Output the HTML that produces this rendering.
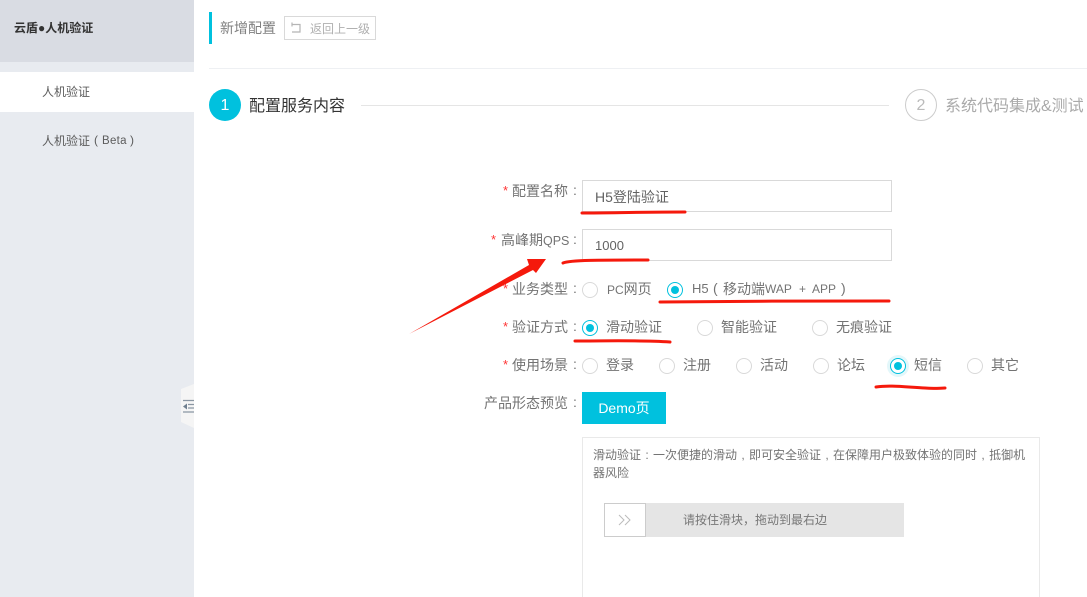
<!DOCTYPE html>
<html lang="zh-CN">
<head>
<meta charset="utf-8">
<title>新增配置</title>
<style>
html,body{margin:0;padding:0;background:#fff}
#p{position:relative;width:1087px;height:597px;overflow:hidden;background:#fff;font-family:"Liberation Sans","Noto Sans CJK SC",sans-serif;color:#737373}
#p div{position:absolute;box-sizing:border-box}
.t{white-space:nowrap;font-size:14px;line-height:20px}
.s{color:#f33;font-size:13px}
.r{width:16px;height:16px;border:1px solid #d9d9d9;border-radius:50%;background:#fff}
.on{border-color:#00c1de}
.on:after{content:"";position:absolute;left:3px;top:3px;width:8px;height:8px;border-radius:50%;background:#00c1de}
.i{left:582px;width:310px;height:32px;border:1px solid #d9d9d9;background:#fff}
.l{font-size:12.500px}
i{display:inline-block;width:12px;text-align:center;font-style:normal}
</style>
</head>
<body>
<div id="p">
<div style="left:0;top:0;width:194px;height:597px;background:#e8ebf0"></div>
<div style="left:0;top:0;width:194px;height:62px;background:#d9dce3"></div>
<div class="t" style="left:14px;top:18px;font-size:12px;font-weight:bold;color:#333">云盾●人机验证</div>
<div style="left:0;top:72px;width:194px;height:40px;background:#fff"></div>
<div class="t" style="left:42px;top:82px;font-size:12px;color:#5c5c5c">人机验证</div>
<div class="t" style="left:42px;top:131px;font-size:12px;color:#5c5c5c">人机验证</div>
<div class="t" style="left:94px;top:130px;font-size:12px;color:#5c5c5c">(</div>
<div class="t" style="left:102px;top:131px;font-size:11.500px;letter-spacing:.3px;color:#5c5c5c">Beta</div>
<div class="t" style="left:130px;top:130px;font-size:12px;color:#5c5c5c">)</div>

<svg style="position:absolute;left:175px;top:380px" width="24" height="52" viewBox="0 0 24 52">
<polygon points="6,9 19,4 19,48 6,42" fill="#f5f5f5"/>
<path d="M8 20.500H19M8 32H19M13 24.500H19M13 28H19" stroke="#8a96a3" stroke-width="1.200" fill="none"/>
<polygon points="8,26.500 12,23.500 12,29.500" fill="#6f7f8f"/>
</svg>

<div style="left:209px;top:12px;width:3px;height:32px;background:#00c1de"></div>
<div class="t" style="left:220px;top:18px;color:#808080">新增配置</div>
<div style="left:284px;top:16px;width:92px;height:24px;border:1px solid #d9d9d9"></div>
<svg style="position:absolute;left:289px;top:22px" width="13" height="12" viewBox="0 0 13 12"><path d="M3 2.500H11V10H3" fill="none" stroke="#b5b5b5" stroke-width="1.200"/><path d="M3 .5V4.500" stroke="#b5b5b5" stroke-width="1.200" fill="none"/></svg>
<div class="t" style="left:310px;top:19px;font-size:12px;color:#b0b0b0">返回上一级</div>
<div style="left:209px;top:68px;width:878px;height:1px;background:#eef0f3"></div>

<div style="left:209px;top:89px;width:32px;height:32px;border-radius:50%;background:#00c1de;color:#fff;font-size:16px;line-height:33px;text-align:center">1</div>
<div class="t" style="left:249px;top:97px;font-size:16px;color:#333;line-height:20px">配置服务内容</div>
<div style="left:361px;top:105px;width:528px;height:1px;background:#e5e5e5"></div>
<div style="left:905px;top:89px;width:32px;height:32px;border-radius:50%;border:1px solid #ccc;color:#bbb;font-size:16px;line-height:31px;text-align:center">2</div>
<div class="t" style="left:945px;top:97px;font-size:16px;color:#aaa">系统代码集成&amp;测试</div>

<div class="t s" style="left:503px;top:181px">*</div>
<div class="t" style="left:512px;top:181px">配置名称</div>
<div class="t" style="left:573px;top:180px">:</div>
<div class="i" style="top:180px"></div>
<div class="t" style="left:595px;top:187px;color:#636363">H5登陆验证</div>

<div class="t s" style="left:491px;top:230px">*</div>
<div class="t" style="left:501px;top:230px">高峰期<span class="l">QPS</span></div>
<div class="t" style="left:573px;top:229px">:</div>
<div class="i" style="top:229px"></div>
<div class="t" style="left:595px;top:236px;color:#636363;font-size:13px">1000</div>

<div class="t s" style="left:503px;top:279px">*</div>
<div class="t" style="left:512px;top:279px">业务类型</div>
<div class="t" style="left:573px;top:278px">:</div>
<div class="r" style="left:582px;top:282px"></div>
<div class="t" style="left:607px;top:279px"><span style="font-size:12px">PC</span>网页</div>
<div class="r on" style="left:667px;top:282px"></div>
<div class="t" style="left:692px;top:279px;font-size:13px">H5</div>
<div class="t" style="left:713px;top:278px">(</div>
<div class="t" style="left:723px;top:279px">移动端</div>
<div class="t" style="left:765px;top:279px;font-size:12px">WAP</div>
<div class="t" style="left:799px;top:279px;font-size:12px">+</div>
<div class="t" style="left:812px;top:279px;font-size:12px">APP</div>
<div class="t" style="left:841px;top:278px">)</div>

<div class="t s" style="left:503px;top:317px">*</div>
<div class="t" style="left:512px;top:317px">验证方式</div>
<div class="t" style="left:573px;top:316px">:</div>
<div class="r on" style="left:582px;top:320px"></div>
<div class="t" style="left:606px;top:317px">滑动验证</div>
<div class="r" style="left:697px;top:320px"></div>
<div class="t" style="left:721px;top:317px">智能验证</div>
<div class="r" style="left:812px;top:320px"></div>
<div class="t" style="left:836px;top:317px">无痕验证</div>

<div class="t s" style="left:503px;top:355px">*</div>
<div class="t" style="left:512px;top:355px">使用场景</div>
<div class="t" style="left:573px;top:354px">:</div>
<div class="r" style="left:582px;top:358px"></div>
<div class="t" style="left:606px;top:355px">登录</div>
<div class="r" style="left:659px;top:358px"></div>
<div class="t" style="left:683px;top:355px">注册</div>
<div class="r" style="left:736px;top:358px"></div>
<div class="t" style="left:760px;top:355px">活动</div>
<div class="r" style="left:813px;top:358px"></div>
<div class="t" style="left:837px;top:355px">论坛</div>
<div class="r on" style="left:890px;top:358px;box-shadow:0 0 0 3px #e3f7fa"></div>
<div class="t" style="left:914px;top:355px">短信</div>
<div class="r" style="left:967px;top:358px"></div>
<div class="t" style="left:991px;top:355px">其它</div>

<div class="t" style="left:484px;top:393px">产品形态预览</div>
<div class="t" style="left:573px;top:392px">:</div>
<div style="left:582px;top:392px;width:84px;height:32px;background:#00c1de;color:#fff;font-size:14px;line-height:32px;text-align:center">Demo页</div>

<div style="left:582px;top:437px;width:458px;height:170px;border:1px solid #e9e9e9"></div>
<div style="left:593px;top:446px;width:436px;font-size:12px;line-height:18px;color:#737373">滑动验证<i>:</i>一次便捷的滑动<i>,</i>即可安全验证<i>,</i>在保障用户极致体验的同时<i>,</i>抵御机器风险</div>

<div style="left:604px;top:503px;width:300px;height:34px;background:#e5e5e5"></div>
<div style="left:604px;top:503px;width:42px;height:34px;background:#fff;border:1px solid #ccc"></div>
<svg style="position:absolute;left:617px;top:513px" width="16" height="14" viewBox="0 0 16 14"><path d="M2 2L7 7L2 12M8 2L13 7L8 12" fill="none" stroke="#bbb" stroke-width="1"/></svg>
<div class="t" style="left:683px;top:510px;font-size:12px;color:#777">请按住滑块，拖动到最右边</div>

<svg style="position:absolute;left:0;top:0" width="1087" height="597" viewBox="0 0 1087 597">
<g fill="none" stroke="#f5190c" stroke-width="3" stroke-linecap="round">
<path d="M582 213C610 213 640 212 685 212"/>
<path d="M563 263C570 260 600 260 648 260"/>
<path d="M660 302C730 301 820 301 889 301"/>
<path d="M575 341C610 341 640 340 670 342"/>
<path d="M876 387C890 385 905 387 925 388C935 389 940 388 945 388"/>
</g>
<polygon points="409,334 529,265 527,259 546,259 536,273 533,270" fill="#f5190c"/>
</svg>
</div>
</body>
</html>
